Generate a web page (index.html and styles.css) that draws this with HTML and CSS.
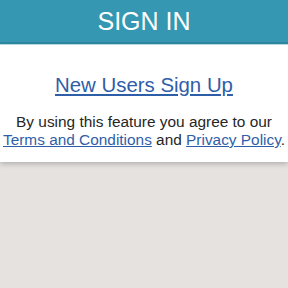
FILE: index.html
```html
<!DOCTYPE html>
<html>
<head>
<meta charset="utf-8">
<link rel="stylesheet" href="styles.css">
</head>
<body>
<header class="topbar">SIGN IN</header>
<section class="card">
  <a class="signup" href="#">New Users Sign Up</a>
  <p class="terms">By using this feature you agree to our <a href="#">Terms and Conditions</a> and <a href="#">Privacy Policy</a>.</p>
</section>
</body>
</html>
```
FILE: styles.css
```css
html, body {
  margin: 0;
  padding: 0;
}
body {
  background: #e5e2df;
  font-family: "Liberation Sans", Arial, sans-serif;
  width: 288px;
  height: 288px;
  overflow: hidden;
}
.topbar {
  display: flex;
  align-items: center;
  justify-content: center;
  height: 42px;
  background: #3597b1;
  border-bottom: 2px solid #2d88a1;
  box-shadow: 0 1px 0 #bfe0e9;
  color: #ffffff;
  font-size: 25px;
}
.card {
  background: #ffffff;
  padding: 28px 0 13px;
  margin-top: 1px;
  display: flex;
  flex-direction: column;
  align-items: center;
  box-shadow: 0 2px 5px rgba(0, 0, 0, 0.22);
}
.signup {
  font-size: 20.4px;
  line-height: 24px;
  color: #2f5ea8;
}
.terms {
  margin: 16px 0 0;
  font-size: 15.4px;
  line-height: 18px;
  color: #262626;
  text-align: center;
}
.terms a {
  color: #2f5ea8;
}
```
